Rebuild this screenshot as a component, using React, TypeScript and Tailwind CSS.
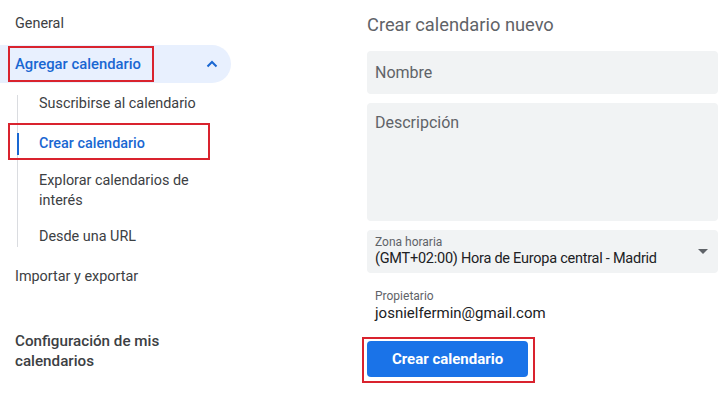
export default function App() {
  return (
    <div className="relative w-[719px] h-[393px] overflow-hidden bg-white flex font-['Roboto',sans-serif] text-[14.4px] text-[#3c4043]">
      {/* Sidebar */}
      <div className="w-[367px] shrink-0">
        <div className="w-[231px]">
          <div className="pt-[14px] pl-[15px] leading-[20px]">General</div>
          <div className="mt-[11px] h-[38px] rounded-r-full bg-[#e8f0fe] flex items-center pl-[15px] pr-[12px] text-[#1967d2] text-[14.8px] font-medium">
            <span className="flex-1">Agregar calendario</span>
            <svg width="12" height="8" viewBox="0 0 12 8" className="mr-[1px]">
              <path d="M1.5 6.5 L6 2 L10.5 6.5" fill="none" stroke="#1967d2" strokeWidth="2" />
            </svg>
          </div>
          <div className="flex">
            <div className="w-px ml-[17px] mt-[12px] mb-[10px] bg-[#dadce0]" />
            <div className="flex-1 flex flex-col leading-[20px]">
              <div className="h-[40px] flex items-center pl-[21px] pt-[2px]">Suscribirse al calendario</div>
              <div className="h-[40px] flex items-center pt-[1px]">
                <div className="w-[2px] h-[22px] -ml-[1px] bg-[#1967d2]" />
                <span className="pl-[20px] text-[#1967d2] font-medium">Crear calendario</span>
              </div>
              <div className="h-[54px] flex items-center pl-[21px] pt-[2px]">
                <span>Explorar calendarios de<br />interés</span>
              </div>
              <div className="h-[40px] flex items-center pl-[21px]">Desde una URL</div>
            </div>
          </div>
          <div className="pl-[15px] mt-[10px] leading-[20px]">Importar y exportar</div>
          <div className="pl-[15px] mt-[44px] leading-[20px] text-[15.2px] font-medium text-[#3c4043]">
            Configuración de mis<br />calendarios
          </div>
        </div>
      </div>

      {/* Form */}
      <div className="w-[351px] shrink-0 flex flex-col">
        <div className="pt-[14px] text-[18.3px] leading-[22px] text-[#5f6368]">Crear calendario nuevo</div>
        <div className="mt-[15px] h-[43px] rounded-[4px] bg-[#f1f3f4] flex items-center px-[8px] text-[16px] text-[#5f6368]">
          Nombre
        </div>
        <div className="mt-[9px] h-[118px] rounded-[4px] bg-[#f1f3f4] px-[8px] pt-[10px] text-[16px] leading-[20px] text-[#5f6368]">
          Descripción
        </div>
        <div className="mt-[9px] h-[43px] rounded-[4px] bg-[#f1f3f4] flex items-center pl-[8px] pr-[10px]">
          <div className="flex-1 flex flex-col">
            <span className="text-[12px] leading-[14px] text-[#5f6368]">Zona horaria</span>
            <span className="text-[14.5px] tracking-[-0.25px] leading-[20px] text-[#202124]">(GMT+02:00) Hora de Europa central - Madrid</span>
          </div>
          <div className="w-0 h-0 border-l-[5px] border-r-[5px] border-t-[5px] border-l-transparent border-r-transparent border-t-[#5f6368]" />
        </div>
        <div className="mt-[16px] pl-[8px] flex flex-col">
          <span className="text-[12px] leading-[14px] text-[#5f6368]">Propietario</span>
          <span className="text-[15px] leading-[20px] text-[#202124]">josnielfermin@gmail.com</span>
        </div>
        <button className="mt-[18px] w-[161px] h-[36px] rounded-[4px] bg-[#1a73e8] text-white font-bold text-[15px]">
          Crear calendario
        </button>
      </div>

      {/* Annotation boxes */}
      <div className="absolute left-[8px] top-[46px] w-[146px] h-[36px] border-2 border-[#d9232e]" />
      <div className="absolute left-[8px] top-[123px] w-[202px] h-[37px] border-2 border-[#d9232e]" />
      <div className="absolute left-[362px] top-[337px] w-[173px] h-[46px] border-2 border-[#d9232e]" />
    </div>
  )
}
